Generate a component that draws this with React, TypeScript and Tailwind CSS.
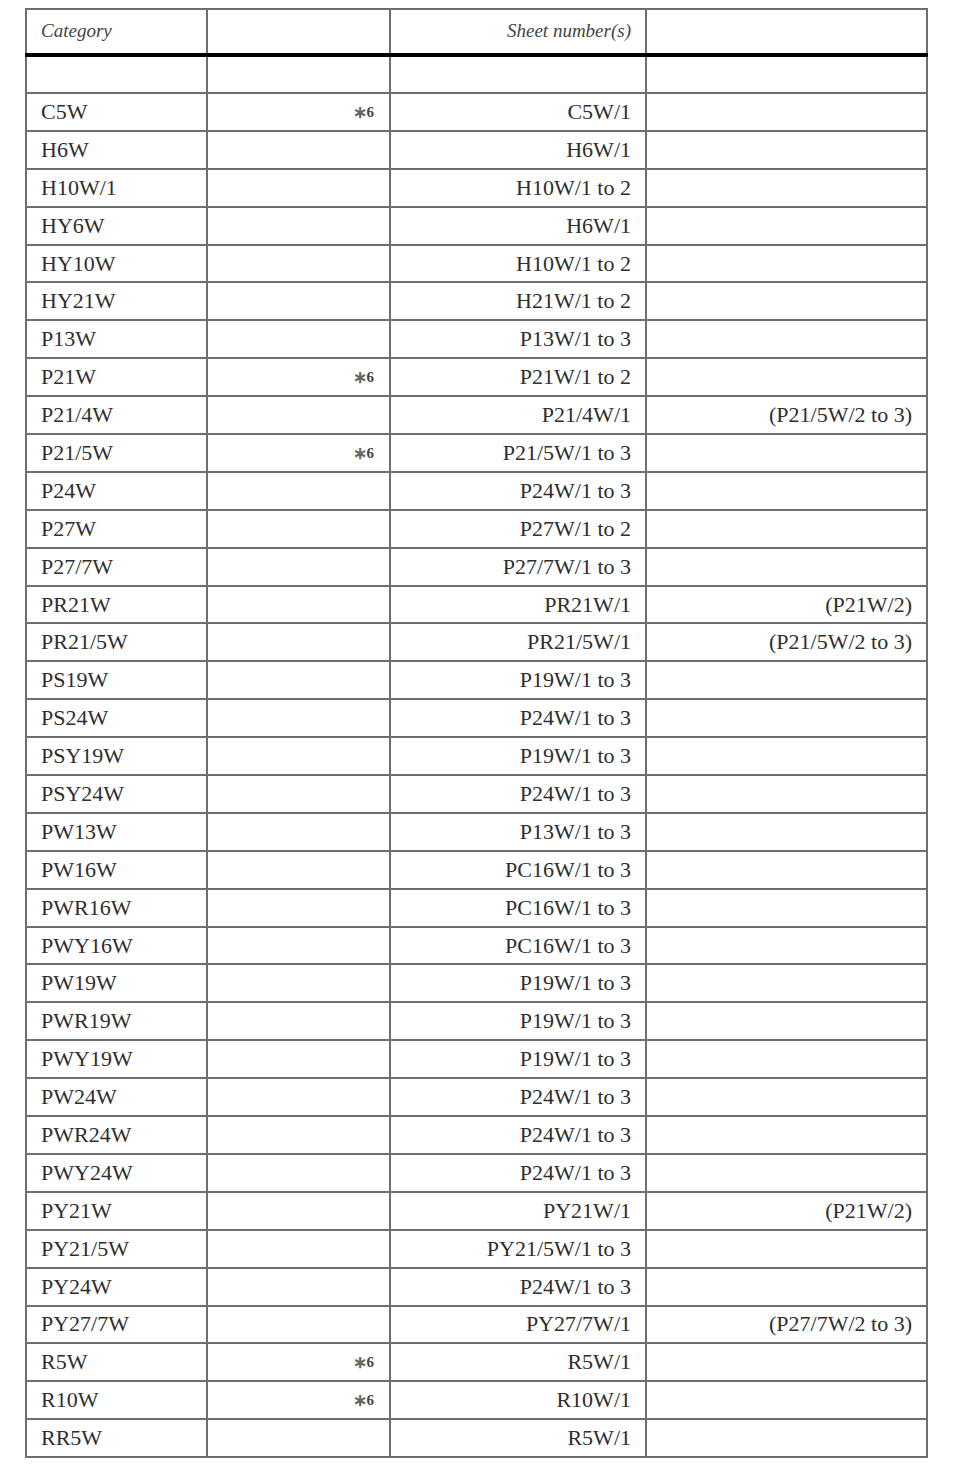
import React from 'react'

type Row = { cat: string; star?: boolean; sheet: string; note?: string }

const rows: Row[] = [
  { cat: 'C5W', star: true, sheet: 'C5W/1' },
  { cat: 'H6W', sheet: 'H6W/1' },
  { cat: 'H10W/1', sheet: 'H10W/1 to 2' },
  { cat: 'HY6W', sheet: 'H6W/1' },
  { cat: 'HY10W', sheet: 'H10W/1 to 2' },
  { cat: 'HY21W', sheet: 'H21W/1 to 2' },
  { cat: 'P13W', sheet: 'P13W/1 to 3' },
  { cat: 'P21W', star: true, sheet: 'P21W/1 to 2' },
  { cat: 'P21/4W', sheet: 'P21/4W/1', note: '(P21/5W/2 to 3)' },
  { cat: 'P21/5W', star: true, sheet: 'P21/5W/1 to 3' },
  { cat: 'P24W', sheet: 'P24W/1 to 3' },
  { cat: 'P27W', sheet: 'P27W/1 to 2' },
  { cat: 'P27/7W', sheet: 'P27/7W/1 to 3' },
  { cat: 'PR21W', sheet: 'PR21W/1', note: '(P21W/2)' },
  { cat: 'PR21/5W', sheet: 'PR21/5W/1', note: '(P21/5W/2 to 3)' },
  { cat: 'PS19W', sheet: 'P19W/1 to 3' },
  { cat: 'PS24W', sheet: 'P24W/1 to 3' },
  { cat: 'PSY19W', sheet: 'P19W/1 to 3' },
  { cat: 'PSY24W', sheet: 'P24W/1 to 3' },
  { cat: 'PW13W', sheet: 'P13W/1 to 3' },
  { cat: 'PW16W', sheet: 'PC16W/1 to 3' },
  { cat: 'PWR16W', sheet: 'PC16W/1 to 3' },
  { cat: 'PWY16W', sheet: 'PC16W/1 to 3' },
  { cat: 'PW19W', sheet: 'P19W/1 to 3' },
  { cat: 'PWR19W', sheet: 'P19W/1 to 3' },
  { cat: 'PWY19W', sheet: 'P19W/1 to 3' },
  { cat: 'PW24W', sheet: 'P24W/1 to 3' },
  { cat: 'PWR24W', sheet: 'P24W/1 to 3' },
  { cat: 'PWY24W', sheet: 'P24W/1 to 3' },
  { cat: 'PY21W', sheet: 'PY21W/1', note: '(P21W/2)' },
  { cat: 'PY21/5W', sheet: 'PY21/5W/1 to 3' },
  { cat: 'PY24W', sheet: 'P24W/1 to 3' },
  { cat: 'PY27/7W', sheet: 'PY27/7W/1', note: '(P27/7W/2 to 3)' },
  { cat: 'R5W', star: true, sheet: 'R5W/1' },
  { cat: 'R10W', star: true, sheet: 'R10W/1' },
  { cat: 'RR5W', sheet: 'R5W/1' },
]

const cell = 'border-2 border-[#6f6f6f] px-[14px] p-0'

export default function App() {
  return (
    <div className="bg-white min-h-[1469px] w-[957px] pt-[8px] pl-[25px] font-['Liberation_Serif',serif] text-[#2e2e2e]">
      <table className="border-collapse w-[901px] table-fixed">
        <colgroup>
          <col className="w-[181px]" />
          <col className="w-[183px]" />
          <col className="w-[256px]" />
          <col className="w-[281px]" />
        </colgroup>
        <thead>
          <tr className="h-[46px] border-b-4 border-b-black">
            <th className={`${cell} text-left font-normal italic text-[19px] text-[#444]`}>Category</th>
            <th className={cell}></th>
            <th className={`${cell} text-right font-normal italic text-[19px] text-[#444]`}>Sheet number(s)</th>
            <th className={cell}></th>
          </tr>
        </thead>
        <tbody>
          <tr className="h-[38px]">
            <td className={cell}></td>
            <td className={cell}></td>
            <td className={cell}></td>
            <td className={cell}></td>
          </tr>
          {rows.map((r) => (
            <tr key={r.cat} className="h-[37.9px] text-[22px] leading-none">
              <td className={`${cell} text-left`}>{r.cat}</td>
              <td className={`${cell} text-right align-top pt-[6px] pr-[15px]`}>
                {r.star && (
                  <span className="text-[#666] text-[17px] font-bold">
                    ∗<sup className="text-[15px] text-[#444] relative -top-[1px]">6</sup>
                  </span>
                )}
              </td>
              <td className={`${cell} text-right`}>{r.sheet}</td>
              <td className={`${cell} text-right`}>{r.note}</td>
            </tr>
          ))}
        </tbody>
      </table>
    </div>
  )
}
